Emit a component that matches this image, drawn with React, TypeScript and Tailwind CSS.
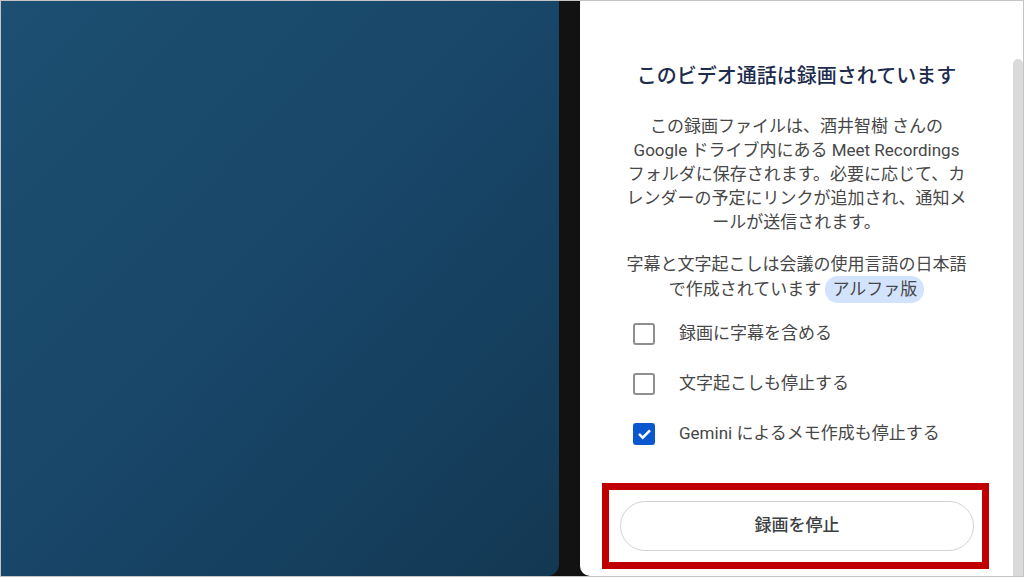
import { useState, type FC } from 'react';

const font = { fontFamily: 'Roboto, "Noto Sans CJK JP", sans-serif' };

interface OptionRowProps {
  label: string;
  checked: boolean;
  onToggle: () => void;
}

const OptionRow: FC<OptionRowProps> = ({ label, checked, onToggle }) => (
  <button type="button" onClick={onToggle} className="flex h-[50px] w-full items-center text-left">
    <span className="ml-[53px] flex h-[22px] w-[22px] items-center justify-center">
      {checked ? (
        <span className="flex h-[22px] w-[22px] items-center justify-center rounded-[3px] bg-[#0b57d0]">
          <svg className="h-[17px] w-[17px]" fill="none" stroke="white" viewBox="0 0 24 24">
            <path strokeWidth={3.5} strokeLinecap="square" d="M5.5 12.5l4 4L18.5 7.5" />
          </svg>
        </span>
      ) : (
        <span className="h-[22px] w-[22px] rounded-[3px] border-2 border-[#8f8f8f]" />
      )}
    </span>
    <span className="ml-[24px] text-[17px] text-[#474747]">{label}</span>
  </button>
);

const App: FC = () => {
  const [opts, setOpts] = useState([false, false, true]);
  const labels = ['録画に字幕を含める', '文字起こしも停止する', 'Gemini によるメモ作成も停止する'];

  const toggle = (i: number) => setOpts((prev) => prev.map((v, idx) => (idx === i ? !v : v)));

  return (
    <div style={font} className="flex h-[577px] w-[1024px] border border-[#c4c4c4] bg-[#121212]">
      {/* meeting video area */}
      <div className="h-full w-[558px] rounded-br-[12px] bg-linear-to-br from-[#1c4f72] via-[#184668] to-[#133853]" />

      <div className="w-[21px]" />

      {/* side panel */}
      <div className="flex h-full flex-1 rounded-bl-[10px] bg-white">
        <div className="flex w-[433px] flex-col pt-[61px]">
          <h2 className="text-center text-[20px] font-medium leading-[28px] text-[#1d2b4c]">
            このビデオ通話は録画されています
          </h2>

          <p className="mt-[24px] text-center text-[17px] leading-[24px] text-[#474747] whitespace-nowrap">
            この録画ファイルは、酒井智樹 さんの
            <br />
            Google ドライブ内にある Meet Recordings
            <br />
            フォルダに保存されます。必要に応じて、カ
            <br />
            レンダーの予定にリンクが追加され、通知メ
            <br />
            ールが送信されます。
          </p>

          <p className="mt-[18px] text-center text-[17px] leading-[24px] text-[#474747] whitespace-nowrap">
            字幕と文字起こしは会議の使用言語の日本語
            <br />
            で作成されています{' '}
            <span className="inline-block rounded-[13px] bg-[#d3e3fd] px-[7px] py-[1px] leading-[25px]">
              アルファ版
            </span>
          </p>

          <div className="mt-[6px] flex flex-col">
            {labels.map((label, i) => (
              <OptionRow key={label} label={label} checked={opts[i]} onToggle={() => toggle(i)} />
            ))}
          </div>

          <div className="ml-[22px] mt-[24px] w-[387px] border-[7px] border-[#c00000] py-[11px]">
            <button
              type="button"
              className="ml-[11px] h-[50px] w-[354px] rounded-full border border-[#d3d3d3] text-[17px] font-medium text-[#3c4043]"
            >
              録画を停止
            </button>
          </div>
        </div>

        {/* scrollbar */}
        <div className="flex h-full w-[10px] flex-col pt-[58px]">
          <div className="flex-1 rounded-t-[5px] bg-[#dadada]" />
        </div>
      </div>
    </div>
  );
};

export default App;
